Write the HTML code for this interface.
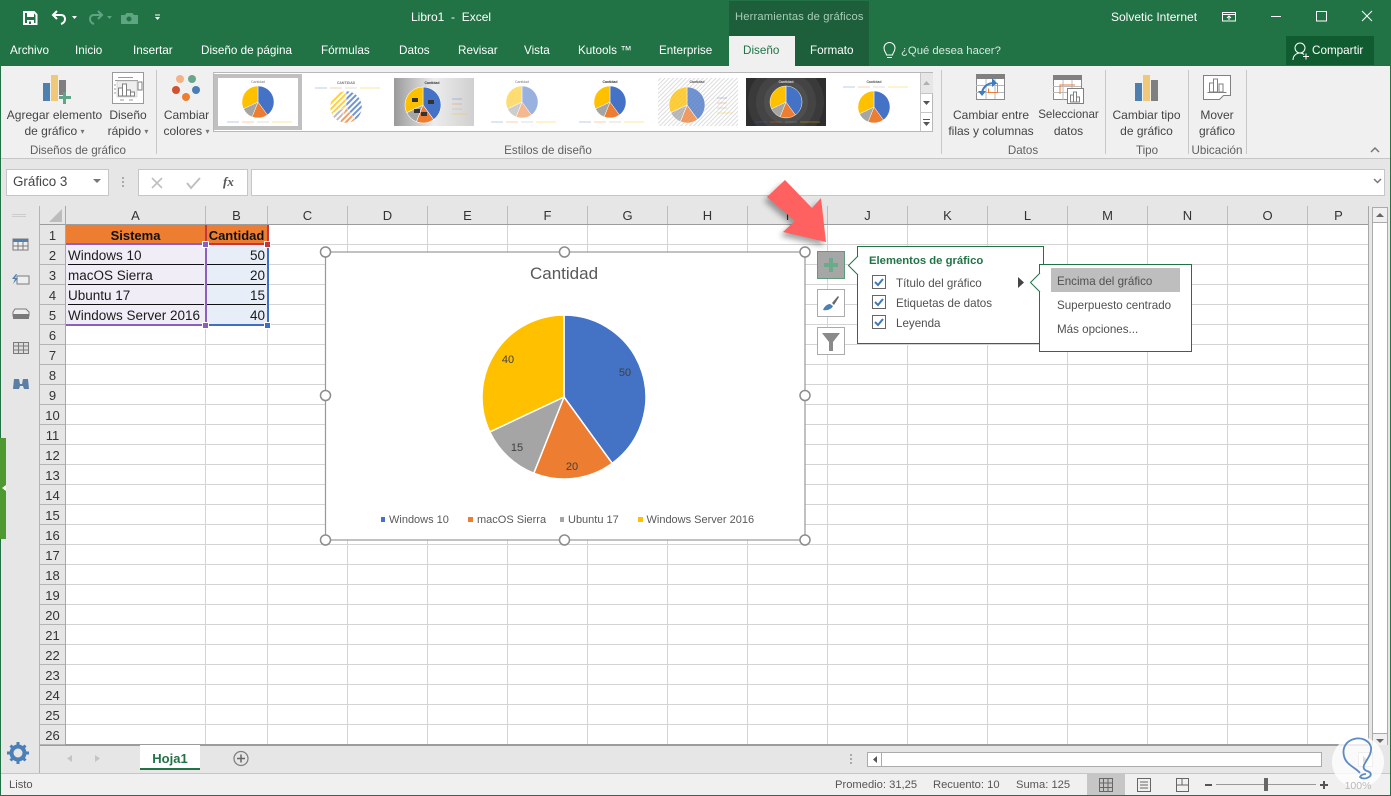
<!DOCTYPE html>
<html lang="es">
<head>
<meta charset="utf-8">
<title>Libro1 - Excel</title>
<style>
html,body{margin:0;padding:0;background:#fff}
#r{position:relative;width:1391px;height:796px;overflow:hidden;font-family:"Liberation Sans",sans-serif;font-size:12px;color:#444;background:#e6e6e6}
#r div,#r span,#r svg{position:absolute}
.t{white-space:nowrap;line-height:16px;height:16px}
.c{transform:translateX(-50%);text-align:center}
.tab{color:#fff;font-size:11.7px;top:43px}
.rb{color:#444;font-size:12px}
.rb i{font-style:normal;font-size:8px;color:#777;vertical-align:1px}
.gl{color:#5f5f5f;font-size:11.6px;top:143px}
.st{color:#555;font-size:11.2px;top:777px}
.sep{background:#c8c8c8;width:1px;top:70px;height:84px}
#rows{left:40px;top:225px;width:25px}
#rows b{display:block;font-weight:normal;height:19px;line-height:21px;border-bottom:1px solid #b4b4b4;text-align:center;font-size:13px;color:#333;overflow:hidden}
#cols{left:66px;top:206px;height:18px;width:1303px;display:flex}
#cols b{display:block;flex:none;box-sizing:border-box;height:18px;line-height:19px;font-weight:normal;text-align:center;font-size:13px;color:#333;border-right:1px solid #bcbcbc}
.cell{font-size:13.5px;color:#1a1a1a;line-height:19px;height:19px;white-space:nowrap}
.p{color:#505050;font-size:11.6px}
.h{width:5px;height:5px;border:1px solid #fff}
</style>
</head>
<body>
<div id="r">
  <!-- title + tabs -->
  <div style="left:0;top:0;width:1391px;height:66px;background:#217346"></div>
  <div style="left:729px;top:1px;width:140px;height:65px;background:#1c5f3a"></div>
  <div style="left:729px;top:36px;width:66px;height:30px;background:#f0f0f0"></div>
  <div style="left:1286px;top:36px;width:88px;height:29px;background:#105c30"></div>

  <span class="t" style="left:411px;top:9px;color:#fff;font-size:12px">Libro1 &nbsp;- &nbsp;Excel</span>
  <span class="t" style="left:735px;top:9px;color:#a8cdb8;font-size:11.2px;letter-spacing:.15px">Herramientas de gráficos</span>
  <span class="t" style="left:1111px;top:9px;color:#fff;font-size:12px">Solvetic Internet</span>

  <span class="t tab" style="left:10px">Archivo</span>
  <span class="t tab" style="left:75px">Inicio</span>
  <span class="t tab" style="left:133px">Insertar</span>
  <span class="t tab" style="left:201px">Diseño de página</span>
  <span class="t tab" style="left:321px">Fórmulas</span>
  <span class="t tab" style="left:399px">Datos</span>
  <span class="t tab" style="left:458px">Revisar</span>
  <span class="t tab" style="left:524px">Vista</span>
  <span class="t tab" style="left:578px">Kutools ™</span>
  <span class="t tab" style="left:659px">Enterprise</span>
  <span class="t tab" style="left:743px;color:#217346">Diseño</span>
  <span class="t tab" style="left:810px">Formato</span>
  <span class="t tab" style="left:901px;color:#d8e8df;font-size:11.3px">¿Qué desea hacer?</span>
  <span class="t tab" style="left:1312px">Compartir</span>

  <!-- ribbon -->
  <div style="left:1px;top:66px;width:1389px;height:92px;background:#f0f0f0"></div>
  <div style="left:1px;top:158px;width:1389px;height:1px;background:#c6c6c6"></div>
  <div class="sep" style="left:156px"></div>
  <div class="sep" style="left:941px"></div>
  <div class="sep" style="left:1105px"></div>
  <div class="sep" style="left:1188px"></div>
  <div class="sep" style="left:1246px"></div>

  <span class="t rb c" style="left:54.5px;top:107px">Agregar elemento</span>
  <span class="t rb c" style="left:54.5px;top:123px">de gráfico <i>▾</i></span>
  <span class="t rb c" style="left:128px;top:107px">Diseño</span>
  <span class="t rb c" style="left:128px;top:123px">rápido <i>▾</i></span>
  <span class="t rb c" style="left:186.5px;top:107px">Cambiar</span>
  <span class="t rb c" style="left:186.5px;top:123px">colores <i>▾</i></span>
  <span class="t rb c" style="left:991px;top:107px">Cambiar entre</span>
  <span class="t rb c" style="left:991px;top:123px">filas y columnas</span>
  <span class="t rb c" style="left:1068.5px;top:107px;font-size:11.6px">Seleccionar</span>
  <span class="t rb c" style="left:1068.5px;top:123px">datos</span>
  <span class="t rb c" style="left:1146.5px;top:107px">Cambiar tipo</span>
  <span class="t rb c" style="left:1146.5px;top:123px">de gráfico</span>
  <span class="t rb c" style="left:1217px;top:107px">Mover</span>
  <span class="t rb c" style="left:1217px;top:123px">gráfico</span>
  <span class="t gl c" style="left:78px">Diseños de gráfico</span>
  <span class="t gl c" style="left:548px">Estilos de diseño</span>
  <span class="t gl c" style="left:1023px">Datos</span>
  <span class="t gl c" style="left:1147px">Tipo</span>
  <span class="t gl c" style="left:1217px">Ubicación</span>

  <!-- gallery box -->
  <div style="left:213px;top:72px;width:718px;height:58px;background:#fff;border:1px solid #b8b8b8"></div>
  <div style="left:214px;top:74px;width:88px;height:56px;background:#c0c0c0"></div>
  <div style="left:920px;top:73px;width:1px;height:58px;background:#c6c6c6"></div>
  <div style="left:921px;top:73px;width:12px;height:20px;background:#e6e6e6"></div>
  <div style="left:921px;top:93px;width:12px;height:1px;background:#c6c6c6"></div>
  <div style="left:921px;top:112px;width:12px;height:1px;background:#c6c6c6"></div>

  <!-- gallery svg -->
  <svg style="left:0;top:0" width="1391" height="170" viewBox="0 0 1391 170">
    <defs>
      <g id="pie" stroke="#fff" stroke-width=".03">
        <path fill="#4472c4" d="M0 0V-1A1 1 0 0 1 .588 .809Z"/>
        <path fill="#ed7d31" d="M0 0L.588 .809A1 1 0 0 1-.368 .93Z"/>
        <path fill="#a5a5a5" d="M0 0L-.368 .93A1 1 0 0 1-.905 .426Z"/>
        <path fill="#ffc000" d="M0 0L-.905 .426A1 1 0 0 1 0-1Z"/>
      </g>
      <pattern id="hw" width="4" height="4" patternUnits="userSpaceOnUse" patternTransform="rotate(45)"><rect width="2" height="4" fill="#fff"/></pattern>
      <pattern id="hb" width="3" height="3" patternUnits="userSpaceOnUse" patternTransform="rotate(45)"><rect width="3" height="3" fill="#fff"/><rect width="1" height="3" fill="#dcdcdc"/></pattern>
      <linearGradient id="gb" x1="0" x2="1"><stop offset="0" stop-color="#9a9a9a"/><stop offset=".5" stop-color="#ececec"/><stop offset="1" stop-color="#d0d0d0"/></linearGradient>
      <clipPath id="dk"><rect x="746" y="78" width="80" height="48"/></clipPath>
      <g id="lg" fill="none" stroke-width=".7" opacity=".5">
        <path stroke="#4472c4" d="M0 0h12"/><path stroke="#ed7d31" d="M15 0h12"/><path stroke="#a5a5a5" d="M30 0h12"/><path stroke="#ffc000" d="M45 0h20"/>
      </g>
      <g id="lr" fill="none" stroke-width=".7" opacity=".5">
        <path stroke="#4472c4" d="M0 0h10"/><path stroke="#ed7d31" d="M0 5h10"/><path stroke="#a5a5a5" d="M0 10h10"/><path stroke="#ffc000" d="M0 15h16"/>
      </g>
    </defs>
    <!-- thumbnails -->
    <rect x="218" y="78" width="80" height="48" fill="#fff"/>
    <use href="#pie" transform="translate(258 102) scale(16)"/>
    <use href="#lg" transform="translate(227 122)"/>
    <text x="258" y="83" font-size="3.5" text-anchor="middle" fill="#777" font-family="Liberation Sans">Cantidad</text>

    <use href="#pie" transform="translate(346 107) scale(16)" opacity=".75"/>
    <circle cx="346" cy="107" r="16" fill="url(#hw)"/>
    <use href="#lg" transform="translate(315 88)"/>
    <text x="346" y="84" font-size="3.5" text-anchor="middle" fill="#777" font-weight="bold" font-family="Liberation Sans">CANTIDAD</text>

    <rect x="394" y="78" width="80" height="48" fill="url(#gb)"/>
    <use href="#pie" transform="translate(423 105) scale(18)"/>
    <use href="#lr" transform="translate(452 99)"/>
    <rect x="412" y="98" width="6" height="4" fill="#333"/><rect x="428" y="100" width="6" height="4" fill="#333"/><rect x="421" y="112" width="6" height="4" fill="#333"/><rect x="414" y="109" width="6" height="4" fill="#333"/>
    <text x="432" y="84" font-size="3.5" text-anchor="middle" fill="#333" font-weight="bold" font-family="Liberation Sans">Cantidad</text>

    <use href="#pie" transform="translate(522 102) scale(16)" opacity=".55"/>
    <use href="#lg" transform="translate(491 122)"/>
    <text x="522" y="83" font-size="3.5" text-anchor="middle" fill="#777" font-family="Liberation Sans">Cantidad</text>

    <use href="#pie" transform="translate(610 102) scale(16)"/>
    <use href="#lg" transform="translate(579 122)"/>
    <text x="610" y="83" font-size="3.5" text-anchor="middle" fill="#333" font-weight="bold" font-family="Liberation Sans">Cantidad</text>

    <rect x="658" y="78" width="80" height="48" fill="url(#hb)"/>
    <use href="#pie" transform="translate(687 105) scale(18)" opacity=".75"/>
    <use href="#lr" transform="translate(717 98)"/>
    <text x="697" y="83" font-size="3.5" text-anchor="middle" fill="#555" font-weight="bold" font-family="Liberation Sans">Cantidad</text>

    <g clip-path="url(#dk)">
      <rect x="746" y="78" width="80" height="48" fill="#2e2e2e"/>
      <circle cx="786" cy="102" r="38" fill="#3a3a3a"/><circle cx="786" cy="102" r="30" fill="#444"/><circle cx="786" cy="102" r="22" fill="#4e4e4e"/>
    </g>
    <use href="#pie" transform="translate(786 102) scale(16)"/>
    <use href="#lg" transform="translate(755 122)"/>
    <text x="786" y="83" font-size="3.5" text-anchor="middle" fill="#ddd" font-weight="bold" font-family="Liberation Sans">Cantidad</text>

    <use href="#pie" transform="translate(874 107) scale(16)"/>
    <use href="#lg" transform="translate(843 87)"/>
    <text x="874" y="83" font-size="3.5" text-anchor="middle" fill="#555" font-weight="bold" font-family="Liberation Sans">Cantidad</text>

    <!-- gallery scroll arrows -->
    <path fill="#b0b0b0" d="M923 85l3.500-4 3.500 4z"/>
    <path fill="#555" d="M923 101l3.500 4 3.500-4z"/>
    <path fill="#555" d="M923 119h7v1h-7zM923 122h7l-3.500 4z"/>

    <!-- QAT -->
    <g fill="none" stroke="#fff" stroke-width="2">
      <path d="M24 12h10l2.500 2.500V24H24z"/>
    </g>
    <path fill="#fff" d="M27 12h7v5h-7zM27 20h7v4h-7z"/><path fill="#217346" d="M29 21.500h2v2.500h-2z"/>
    <path fill="none" stroke="#fff" stroke-width="2" d="M57 11l-4 4 4 4M53 15h8c3 0 4 2 4 4s-1 4-4 5"/>
    <path fill="#fff" d="M72 16h5l-2.500 3z"/>
    <path fill="none" stroke="#5fa582" stroke-width="2" d="M98 11l4 4-4 4M102 15h-8c-3 0-4 2-4 4s1 4 4 5"/>
    <path fill="#5fa582" d="M107 16h5l-2.500 3z"/>
    <path fill="#5fa582" d="M121 15h4l1.500-2h6l1.500 2h4v9h-17z"/><circle cx="129" cy="19" r="2.500" fill="#217346"/>
    <path fill="#fff" d="M155 14.500h5v1h-5zM155 17h5l-2.500 3z"/>

    <!-- window controls -->
    <path fill="none" stroke="#fff" d="M1222.500 12.500h13v8.500h-13zM1222.500 14.500h13"/><path fill="none" stroke="#fff" d="M1229 20v-4M1227 18l2-2 2 2"/>
    <path stroke="#fff" d="M1271 16.500h10"/>
    <rect x="1316.500" y="11.500" width="10" height="9.500" fill="none" stroke="#fff"/>
    <path stroke="#fff" d="M1362 11l10 10M1372 11l-10 10"/>

    <!-- tell me bulb, share -->
    <g fill="none" stroke="#fff">
      <path d="M886.500 55c0-2-2.500-3-2.500-7a5.500 5.500 0 0 1 11 0c0 4-2.500 5-2.500 7zM887 57.500h5"/>
      <circle cx="1300" cy="48" r="5"/><path d="M1293 60c0-4 3-7 7-7 1.500 0 3 .5 4 1.500"/>
      <path d="M1303 56.500h6M1306 53.500v6"/>
    </g>

    <!-- add chart element -->
    <rect x="43" y="83" width="7" height="18" fill="#4e7fae"/>
    <rect x="51" y="75" width="7" height="26" fill="#f0c87a"/>
    <rect x="59" y="80" width="7" height="15" fill="#7f7f7f"/>
    <path fill="#5fa58a" d="M63 92h3v4h5v3h-5v5h-3v-5h-4v-3h4z"/>

    <!-- quick layout -->
    <rect x="112.500" y="72.500" width="31" height="31" fill="#fff" stroke="#9a9a9a"/>
    <path stroke="#9a9a9a" d="M118 77.500h15M115 80.500h23"/>
    <rect x="117" y="81" width="20" height="16" fill="#eee" stroke="#bbb" stroke-width=".5"/>
    <path fill="#fff" stroke="#808080" d="M118.500 96v-8h4v8zM122.500 96v-12h4v12zM126.500 96v-6h4v6zM130.500 96v-4h4v4z"/>
    <rect x="138" y="82" width="4" height="8" fill="#fff" stroke="#808080"/>
    <path stroke="#9a9a9a" d="M120 100h4M129 100h4M114 85h2M114 89h2M114 93h2"/>

    <!-- colours -->
    <circle cx="180" cy="79" r="4" fill="#f4b183"/>
    <circle cx="192" cy="79" r="4" fill="#6aa68a"/>
    <circle cx="176" cy="90" r="4" fill="#d2512e"/>
    <circle cx="196" cy="90" r="4" fill="#4a7fb5"/>
    <circle cx="186" cy="97" r="4" fill="#ed7d31"/>

    <!-- switch rows/cols -->
    <rect x="976.500" y="74.500" width="28" height="25" fill="#fff" stroke="#8a8a8a"/>
    <rect x="976" y="74" width="29" height="5" fill="#808080"/>
    <path stroke="#bbb" d="M976 85.500h28M976 92.500h28M986 79v20M995 79v20"/>
    <path fill="none" stroke="#ed7d31" d="M990 83.500h7.500v9h-9v-4"/>
    <path fill="none" stroke="#3f7cbf" stroke-width="2" d="M982 94c0-6 5-11 12-11"/>
    <path fill="#3f7cbf" d="M992 78l5 5-5 4zM978 91h8l-4 5z"/>

    <!-- select data -->
    <rect x="1053.500" y="75.500" width="28" height="24" fill="#fff" stroke="#8a8a8a"/>
    <rect x="1053" y="75" width="29" height="5" fill="#808080"/>
    <path stroke="#bbb" d="M1053 86.500h28M1053 92.500h28M1063 80v20M1072 80v20"/>
    <path fill="none" stroke="#ed7d31" d="M1060 94V85h15"/>
    <rect x="1067.500" y="88.500" width="16" height="15" fill="#fff" stroke="#808080"/>
    <path fill="#fff" stroke="#808080" d="M1070.500 102v-7h3v7zM1073.500 102v-10h3v10zM1076.500 102v-5h3v5z"/>

    <!-- change type -->
    <rect x="1135" y="83" width="7" height="18" fill="#4e7fae"/>
    <rect x="1143" y="75" width="7" height="26" fill="#f0c87a"/>
    <rect x="1151" y="80" width="7" height="21" fill="#7f7f7f"/>

    <!-- move -->
    <path fill="#fff" stroke="#808080" d="M1203.500 75.500h27v20h-7l-4 4h-16z"/>
    <path fill="#fff" stroke="#808080" d="M1209.500 92v-9h4v9zM1213.500 92V79h4v13zM1219 92v-8h4v8z"/>
    <path stroke="#808080" d="M1207.500 92.500h19"/>

    <!-- collapse chevron -->
    <path fill="none" stroke="#777" stroke-width="1.500" d="M1371 152l4-4 4 4"/>
  </svg>

  <!-- formula bar -->
  <div style="left:1px;top:159px;width:1389px;height:47px;background:#e6e6e6"></div>
  <div style="left:6px;top:169px;width:101px;height:25px;background:#fff;border:1px solid #c6c6c6"></div>
  <span class="t" style="left:13px;top:174px;font-size:13.4px;color:#444">Gráfico 3</span>
  <div style="left:138px;top:169px;width:108px;height:25px;background:#fff;border:1px solid #c6c6c6"></div>
  <div style="left:251px;top:169px;height:25px;background:#fff;border:1px solid #c6c6c6;width:1132px"></div>
  <span class="t" style="left:223px;top:174px;font-family:'Liberation Serif',serif;font-style:italic;font-weight:bold;color:#555;font-size:13px">fx</span>
  <svg style="left:0;top:165px" width="1391" height="35" viewBox="0 165 1391 35">
    <path fill="#777" d="M93 179h8l-4 4z"/>
    <path fill="#aaa" d="M122 177h2v2h-2zM122 181h2v2h-2zM122 185h2v2h-2z"/>
    <path stroke="#c0c0c0" stroke-width="1.600" d="M152 178l10 10M162 178l-10 10" fill="none"/>
    <path stroke="#c0c0c0" stroke-width="2" d="M187 183l4 5 9-10" fill="none"/>
    <path fill="none" stroke="#777" stroke-width="1.500" d="M1374 179l3.500 3.500 3.500-3.500"/>
  </svg>

  <!-- left pane -->
  <div style="left:0;top:66px;width:1px;height:730px;background:#217346"></div>
  <div style="left:1390px;top:66px;width:1px;height:730px;background:#217346"></div>
  <div style="left:39px;top:206px;width:1px;height:566px;background:#b4b4b4"></div>
  <div style="left:0;top:438px;width:6px;height:101px;background:#4e9a30"></div>
  <svg style="left:0;top:206px" width="40" height="570" viewBox="0 206 40 570">
    <path fill="#fff" d="M2 488l4-3v6z"/>
    <path stroke="#ccc" stroke-width="1" d="M12 214.500h14M12 216.500h14"/>
    <rect x="13" y="239" width="15" height="11" fill="#eee" stroke="#7a7a7a"/><rect x="13" y="239" width="15" height="3" fill="#4e7fae"/><path stroke="#7a7a7a" d="M18 242v8M23 242v8M13 246h15"/>
    <rect x="17" y="276" width="12" height="8" fill="#eee" stroke="#7a7a7a"/><path fill="#4e7fae" d="M16 274l-4 5h3l-2 5 5-6h-3l2-4z"/>
    <path fill="#eee" stroke="#7a7a7a" d="M15 309h11l3 3v4H13v-4z"/><path fill="#7a7a7a" d="M13 314h16v5H13z"/>
    <rect x="13.500" y="342.500" width="15" height="11" fill="#ddd" stroke="#7a7a7a"/><path stroke="#7a7a7a" d="M18.500 342v12M23.500 342v12M13 346h16M13 350h16"/>
    <path fill="#5a7ea5" d="M14 379h5l1 5h2l1-5h5l1 10h-5l-1-3h-3l-1 3h-6z"/>
  </svg>

  <!-- column headers -->
  <div id="cols">
    <b style="width:140px">A</b><b style="width:62px">B</b><b style="width:80px">C</b><b style="width:80px">D</b><b style="width:80px">E</b><b style="width:80px">F</b><b style="width:80px">G</b><b style="width:80px">H</b><b style="width:80px">I</b><b style="width:80px">J</b><b style="width:80px">K</b><b style="width:80px">L</b><b style="width:80px">M</b><b style="width:80px">N</b><b style="width:80px">O</b><b style="width:61px;border-right:0">P</b>
  </div>
  <svg style="left:40px;top:206px" width="26" height="19" viewBox="0 0 26 19"><path fill="#bcbcbc" d="M22 3v13H9z"/><path stroke="#bcbcbc" d="M25.500 0v19"/></svg>
  <div style="left:40px;top:224px;width:1329px;height:1px;background:#9c9c9c"></div>

  <!-- row headers -->
  <div id="rows"><b>1</b><b>2</b><b>3</b><b>4</b><b>5</b><b>6</b><b>7</b><b>8</b><b>9</b><b>10</b><b>11</b><b>12</b><b>13</b><b>14</b><b>15</b><b>16</b><b>17</b><b>18</b><b>19</b><b>20</b><b>21</b><b>22</b><b>23</b><b>24</b><b>25</b><b>26</b></div>
  <div style="left:65px;top:206px;width:1px;height:539px;background:#a8a8a8"></div>

  <!-- grid -->
  <div style="left:66px;top:225px;width:1303px;height:519px;background-color:#fff;background-image:repeating-linear-gradient(to bottom,transparent 0,transparent 19px,#d4d4d4 19px,#d4d4d4 20px),linear-gradient(#d4d4d4,#d4d4d4),linear-gradient(#d4d4d4,#d4d4d4),repeating-linear-gradient(to right,transparent 0,transparent 79px,#d4d4d4 79px,#d4d4d4 80px);background-size:100% 100%,1px 100%,1px 100%,1101px 100%;background-position:0 0,139px 0,201px 0,202px 0;background-repeat:no-repeat"></div>
  <div style="left:65px;top:744px;width:1304px;height:1px;background:#9c9c9c"></div>
  <div style="left:1368px;top:206px;width:1px;height:539px;background:#a8a8a8"></div>

  <!-- cells -->
  <div style="left:66px;top:225px;width:140px;height:19px;background:#ed7d31"></div>
  <div style="left:206px;top:225px;width:62px;height:19px;background:#ed7d31"></div>
  <div style="left:66px;top:245px;width:139px;height:79px;background:#f1edf7"></div>
  <div style="left:206px;top:245px;width:61px;height:79px;background:#e7eef8"></div>
  <div style="left:68px;top:264px;width:136px;height:1px;background:#111"></div>
  <div style="left:68px;top:284px;width:136px;height:1px;background:#111"></div>
  <div style="left:68px;top:304px;width:136px;height:1px;background:#111"></div>
  <div style="left:207px;top:264px;width:59px;height:1px;background:#111"></div>
  <div style="left:207px;top:284px;width:59px;height:1px;background:#111"></div>
  <div style="left:207px;top:304px;width:59px;height:1px;background:#111"></div>

  <span class="t c" style="left:135.5px;top:228px;font-weight:bold;font-size:13px;color:#111">Sistema</span>
  <span class="t c" style="left:236.5px;top:228px;font-weight:bold;font-size:13px;color:#111">Cantidad</span>
  <span class="cell" style="left:68px;top:246px">Windows 10</span>
  <span class="cell" style="left:68px;top:266px">macOS Sierra</span>
  <span class="cell" style="left:68px;top:286px">Ubuntu 17</span>
  <span class="cell" style="left:68px;top:306px">Windows Server 2016</span>
  <span class="cell" style="left:250px;top:246px">50</span>
  <span class="cell" style="left:250px;top:266px">20</span>
  <span class="cell" style="left:250px;top:286px">15</span>
  <span class="cell" style="left:250px;top:306px">40</span>

  <!-- range borders -->
  <div style="left:66px;top:243px;width:140px;height:2px;background:#8b5fbf"></div>
  <div style="left:66px;top:324px;width:140px;height:2px;background:#8b5fbf"></div>
  <div style="left:205px;top:245px;width:2px;height:80px;background:#8b5fbf"></div>
  <div style="left:266.5px;top:245px;width:2px;height:80px;background:#3f6fc4"></div>
  <div style="left:207px;top:324px;width:61px;height:2px;background:#3f6fc4"></div>
  <div style="left:205px;top:225px;width:2px;height:19px;background:#c8363c"></div>
  <div style="left:266.5px;top:225px;width:2px;height:19px;background:#c8363c"></div>
  <div style="left:206px;top:243px;width:62px;height:2px;background:#c8363c"></div>
  <div class="h" style="left:202px;top:241px;background:#8b5fbf"></div>
  <div class="h" style="left:264px;top:241px;background:#c8363c"></div>
  <div class="h" style="left:202px;top:322px;background:#8b5fbf"></div>
  <div class="h" style="left:264px;top:322px;background:#3f6fc4"></div>

  <!-- chart -->
  <svg style="left:315px;top:242px" width="500" height="308" viewBox="315 242 500 308" font-family="Liberation Sans">
    <rect x="325.500" y="252" width="479.500" height="288" fill="#fff" stroke="#989898" stroke-width="1.200"/>
    <text x="564" y="279" font-size="17" text-anchor="middle" fill="#595959">Cantidad</text>
    <g stroke="#fff" stroke-width="1.500">
      <path fill="#4472c4" d="M564 397V315A82 82 0 0 1 612.200 463.300Z"/>
      <path fill="#ed7d31" d="M564 397L612.200 463.300A82 82 0 0 1 533.800 473.200Z"/>
      <path fill="#a5a5a5" d="M564 397L533.800 473.200A82 82 0 0 1 489.800 431.900Z"/>
      <path fill="#ffc000" d="M564 397L489.800 431.900A82 82 0 0 1 564 315Z"/>
    </g>
    <g font-size="11" fill="#404040" text-anchor="middle">
      <text x="625" y="376">50</text><text x="572" y="470">20</text><text x="517" y="451">15</text><text x="508" y="363">40</text>
    </g>
    <g font-size="11" fill="#595959">
      <rect x="381" y="517" width="4" height="5" fill="#4472c4"/><text x="389" y="523">Windows 10</text>
      <rect x="468" y="517" width="5" height="5" fill="#ed7d31"/><text x="477" y="523">macOS Sierra</text>
      <rect x="560" y="517" width="4" height="5" fill="#a5a5a5"/><text x="568" y="523">Ubuntu 17</text>
      <rect x="638" y="517" width="5" height="5" fill="#ffc000"/><text x="646.500" y="523">Windows Server 2016</text>
    </g>
    <g fill="#fff" stroke="#8c8c8c" stroke-width="1.500">
      <circle cx="325.500" cy="252" r="5"/><circle cx="564.500" cy="252" r="5"/><circle cx="805" cy="252" r="5"/>
      <circle cx="325.500" cy="395.500" r="5"/><circle cx="805" cy="395.500" r="5"/>
      <circle cx="325.500" cy="540" r="5"/><circle cx="564.500" cy="540" r="5"/><circle cx="805" cy="540" r="5"/>
    </g>
  </svg>

  <!-- chart buttons -->
  <svg style="left:810px;top:180px" width="240" height="180" viewBox="810 180 240 180">
    <rect x="817.500" y="251.500" width="27" height="27" fill="#a6a6a6" stroke="#5f9a7c"/>
    <path fill="#6aab8b" d="M829 258h4v5h5v4h-5v5h-4v-5h-5v-4h5z"/>
    <rect x="817.500" y="289.500" width="27" height="27" fill="#fff" stroke="#ababab"/>
    <path fill="#666" d="M832 303l6-7 1 1-5 8z"/>
    <path fill="#4a7fb8" d="M823 310c1-3 4-6 7-6l3 2c-1 3-6 5-10 4z"/>
    <rect x="817.500" y="327.500" width="27" height="27" fill="#fff" stroke="#ababab"/>
    <path fill="#8a8a8a" d="M822 333h18l-7 9v9h-4v-9z"/>
  </svg>

  <!-- popover -->
  <div style="left:857px;top:246px;width:185px;height:96px;background:#fff;border:1px solid #217346"></div>
  <span class="t" style="left:869px;top:253px;font-weight:bold;font-size:11.3px;color:#217346">Elementos de gráfico</span>
  <span class="t p" style="left:896px;top:276px">Título del gráfico</span>
  <span class="t p" style="left:896px;top:296px">Etiquetas de datos</span>
  <span class="t p" style="left:896px;top:316px">Leyenda</span>

  <div style="left:1039px;top:264px;width:151px;height:86px;background:#fff;border:1px solid #217346"></div>
  <div style="left:1051px;top:268px;width:129px;height:24px;background:#bebebe"></div>
  <span class="t p" style="left:1057px;top:274px">Encima del gráfico</span>
  <span class="t p" style="left:1057px;top:298px">Superpuesto centrado</span>
  <span class="t p" style="left:1057px;top:322px">Más opciones...</span>

  <svg style="left:840px;top:240px" width="210" height="100" viewBox="840 240 210 100">
    <path fill="#fff" stroke="#217346" d="M858 256l-9.500 9.500 9.500 9.500"/>
    <path fill="#fff" d="M858 257v17l-8-8.500z"/>
    <path fill="#fff" stroke="#217346" d="M1040 273l-9.500 9.500 9.500 9.500"/>
    <path fill="#fff" d="M1040 274v17l-8-8.500z"/>
    <path fill="#444" d="M1018 277l6 5.500-6 5.500z"/>
    <g fill="#fff" stroke="#666">
      <rect x="872.500" y="275.500" width="13" height="13"/><rect x="872.500" y="295.500" width="13" height="13"/><rect x="872.500" y="315.500" width="13" height="13"/>
    </g>
    <g fill="none" stroke="#3f78b8" stroke-width="2">
      <path d="M875 282l3 3 5-6"/><path d="M875 302l3 3 5-6"/><path d="M875 322l3 3 5-6"/>
    </g>
  </svg>

  <!-- red arrow -->
  <svg style="left:755px;top:170px;filter:drop-shadow(-3px 4px 3px rgba(0,0,0,.35))" width="80" height="80" viewBox="755 170 80 80">
    <path fill="#ff6060" d="M785 180L812 208 821 198 826 242 783 232 795 221 767 197z"/>
  </svg>

  <!-- vertical scrollbar -->
  <div style="left:1372px;top:207px;height:538px;background:#fff;border-left:1px solid #ababab;border-right:1px solid #ababab;box-sizing:border-box;width:16px"></div>
  <div style="left:1372px;top:207px;width:16px;height:16px;box-sizing:border-box;background:#f0f0f0;border:1px solid #ababab"></div>
  <div style="left:1372px;top:733px;width:16px;height:13px;box-sizing:border-box;background:#f0f0f0;border:1px solid #ababab"></div>
  <svg style="left:1372px;top:207px" width="16" height="540" viewBox="0 0 16 540"><path fill="#666" d="M4 10l4-4 4 4zM4 532l4 4 4-4z"/></svg>

  <!-- sheet tabs -->
  <div style="left:1px;top:745px;width:1389px;height:28px;background:#e6e6e6"></div>
  <div style="left:39px;top:745px;width:1px;height:28px;background:#b4b4b4"></div>
  <div style="left:40px;top:745px;width:1328px;height:1px;background:#9c9c9c"></div>
  <div style="left:140px;top:745px;width:60px;height:25px;background:#fff"></div>
  <div style="left:140px;top:768px;width:60px;height:2px;background:#217346"></div>
  <span class="t c" style="left:170px;top:751px;font-weight:bold;font-size:13px;color:#217346">Hoja1</span>
  <svg style="left:60px;top:748px" width="200" height="22" viewBox="60 748 200 22">
    <path fill="#c4c4c4" d="M72 755v7l-5-3.500zM95 755v7l5-3.500z"/>
    <circle cx="241" cy="758.500" r="7" fill="none" stroke="#808080" stroke-width="1.300"/>
    <path stroke="#666" stroke-width="1.500" d="M237 758.500h8M241 754.500v8"/>
  </svg>

  <!-- gear -->
  <svg style="left:4px;top:739px" width="28" height="28" viewBox="4 739 28 28">
    <circle cx="18" cy="753" r="6.500" fill="none" stroke="#4a7fb8" stroke-width="4"/>
    <g stroke="#4a7fb8" stroke-width="3"><path d="M18 742v4M18 760v4M7 753h4M25 753h4M10.500 745.500l3 3M25.500 745.500l-3 3M10.500 760.500l3-3M25.500 760.500l-3-3"/></g>
  </svg>

  <!-- horizontal scrollbar -->
  <svg style="left:845px;top:748px" width="546" height="22" viewBox="845 748 546 22">
    <path fill="#aaa" d="M850 754h2v2h-2zM850 758h2v2h-2zM850 762h2v2h-2z"/>
    <rect x="867.500" y="752.500" width="454" height="14" fill="#fff" stroke="#ababab"/>
    <rect x="867.500" y="752.500" width="14" height="14" fill="#fff" stroke="#ababab"/>
    <path fill="#555" d="M877 756v7l-4-3.500z"/>
    <rect x="1358.500" y="752.500" width="14" height="14" fill="#fff" stroke="#ababab"/>
    <path fill="#555" d="M1363 756v7l4-3.500z"/>
  </svg>

  <!-- status bar -->
  <div style="left:1px;top:773px;width:1389px;height:22px;background:#f0f0f0"></div>
  <div style="left:1px;top:773px;width:1389px;height:1px;background:#c6c6c6"></div>
  <div style="left:0;top:795px;width:1391px;height:1px;background:#217346"></div>
  <div style="left:1087px;top:774px;width:38px;height:21px;background:#c6c6c6"></div>
  <span class="t st" style="left:9px">Listo</span>
  <span class="t st" style="left:835px">Promedio: 31,25</span>
  <span class="t st" style="left:933px">Recuento: 10</span>
  <span class="t st" style="left:1016px">Suma: 125</span>
  <svg style="left:1085px;top:773px" width="250" height="23" viewBox="1085 773 250 23">
    <path fill="none" stroke="#666" d="M1099.500 778.500h13v13h-13zM1103.500 778v14M1108 778v14M1099 783h14M1099 787.500h14"/>
    <path fill="none" stroke="#666" d="M1137.500 778.500h13v13h-13zM1140 782h8M1140 785h8M1140 788h8"/>
    <path fill="none" stroke="#666" d="M1176.500 778.500h12v13h-12zM1182 778v7h-5M1182 785h6"/>
    <path stroke="#555" stroke-width="2" d="M1205 785h7M1320 785h8M1324 781v8"/>
    <path stroke="#999" d="M1216 784.500h100"/>
    <rect x="1264" y="778" width="4" height="13" fill="#666"/>
  </svg>

  <!-- watermark -->
  <svg style="left:1325px;top:730px" width="66" height="66" viewBox="1325 730 66 66">
    <circle cx="1358" cy="762" r="26" fill="#fff" opacity=".8"/>
    <path fill="none" stroke="#5c8ac4" stroke-width="1.800" d="M1360 773c-5-6-14-8-16-17-2-8 2-15 10-17 7-2 15 1 17 8 1 7-4 12-7 18-1 3 0 5 3 6 4 1 5 4 2 6-3 2-7 2-9 0 1-2 3-3 6-3"/>
    <text x="1358" y="789" font-size="10.5" fill="#b8b8b8" font-family="Liberation Sans" text-anchor="middle">100%</text>
  </svg>
</div>
</body>
</html>
